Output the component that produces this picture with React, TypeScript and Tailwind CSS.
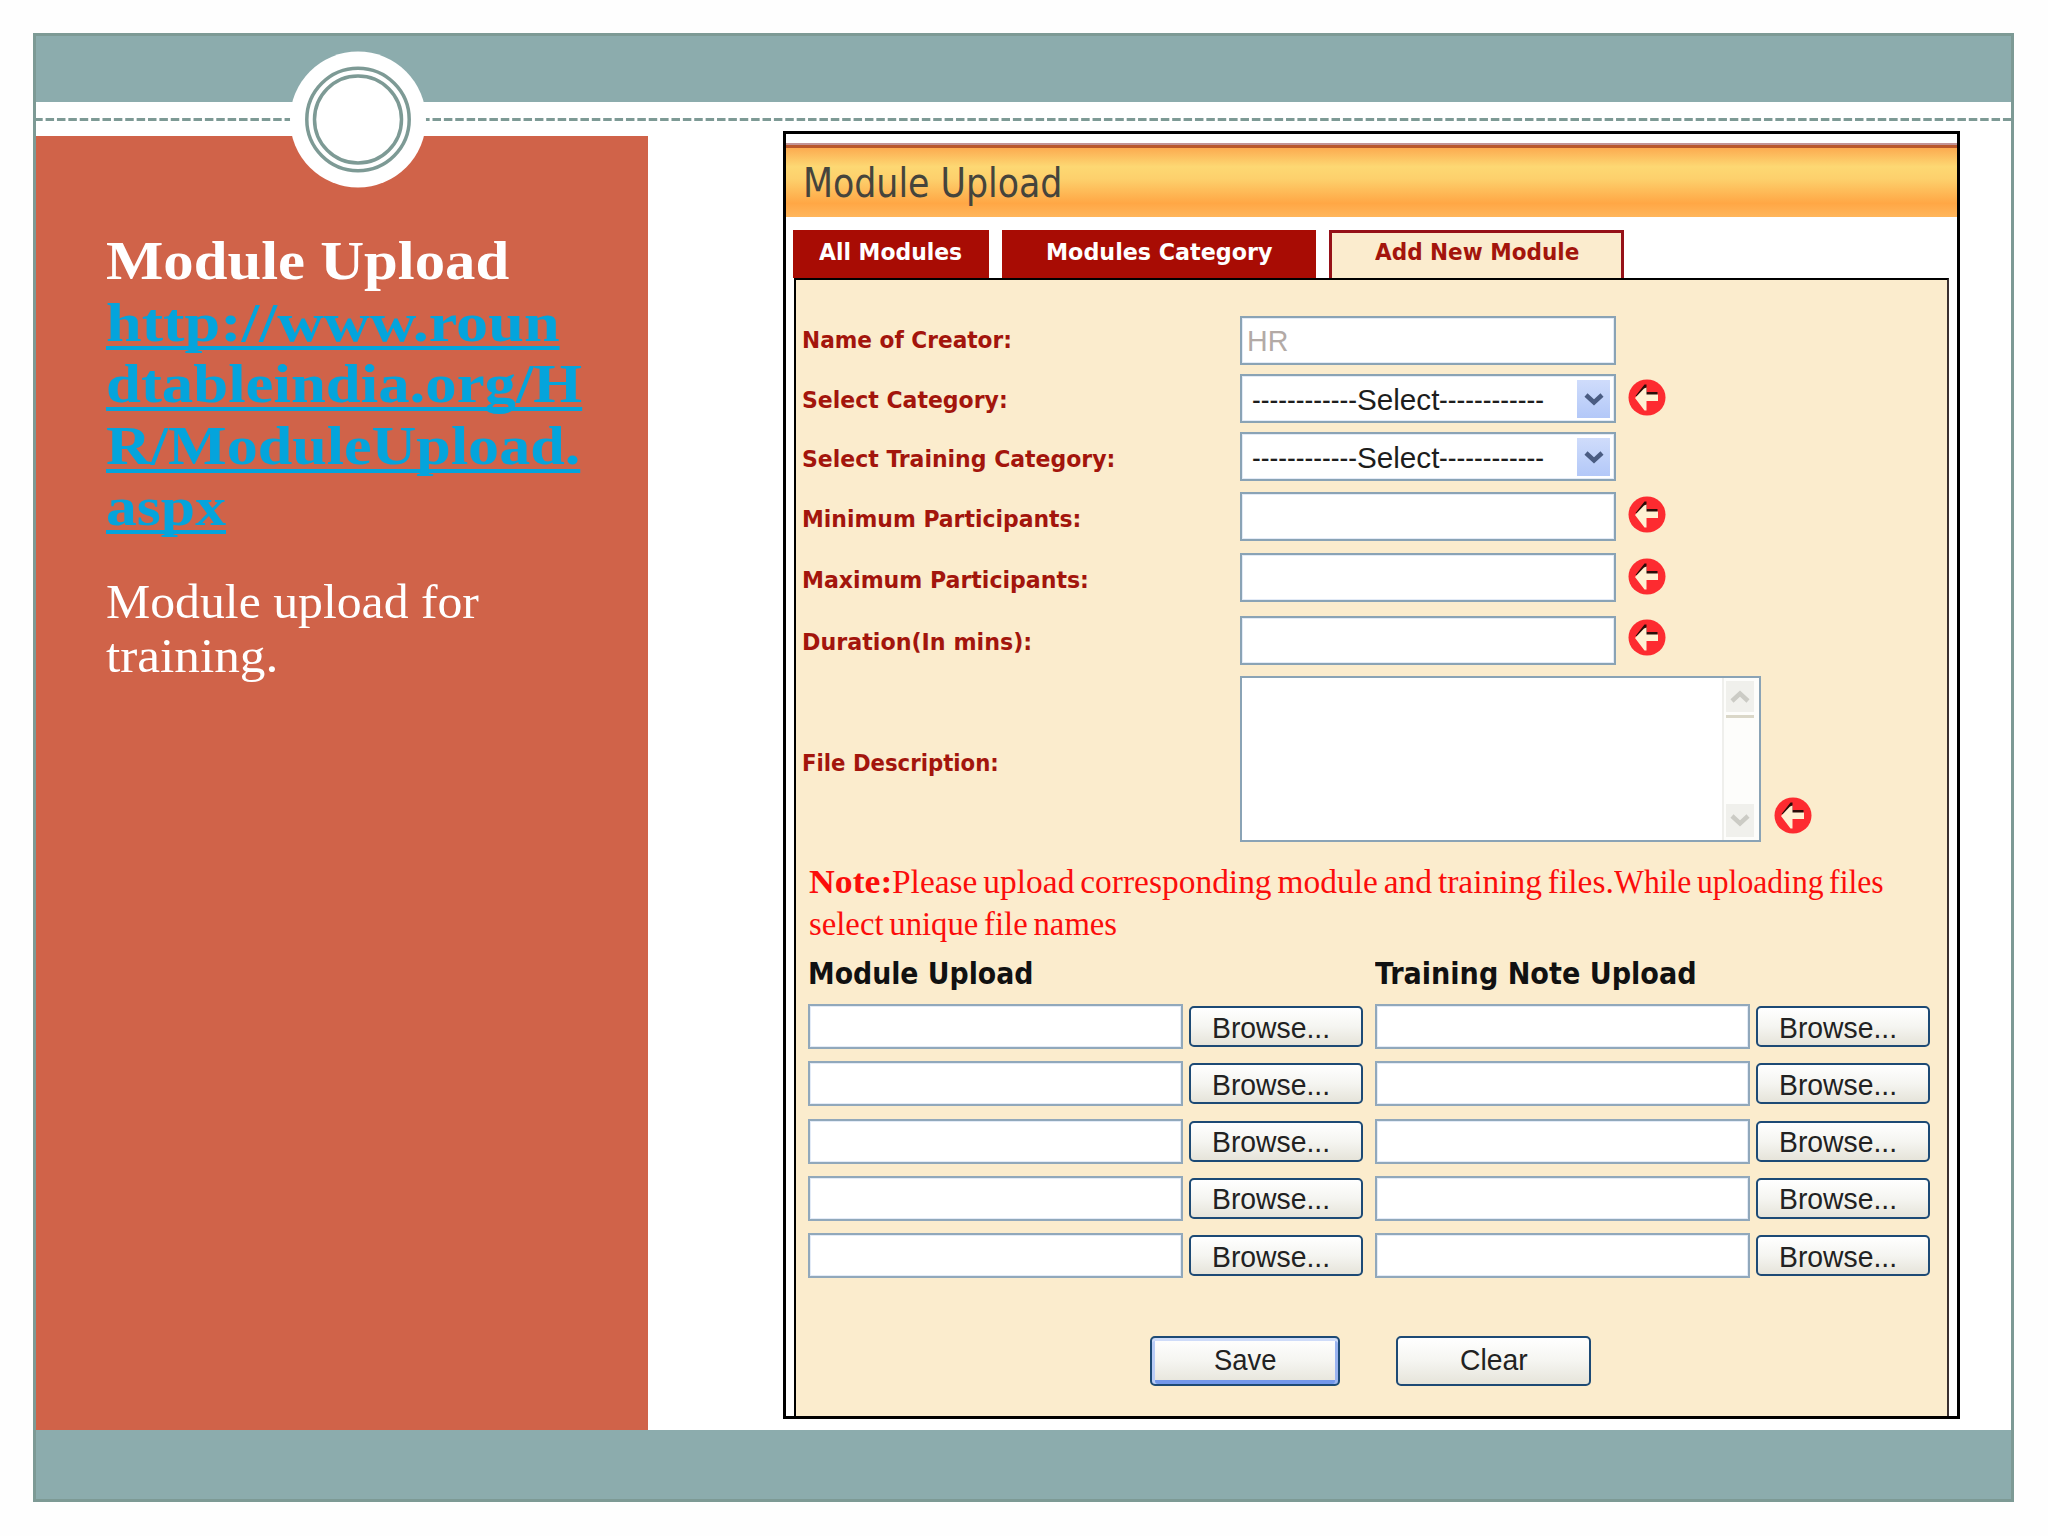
import React, { useLayoutEffect, useRef, useState } from "react";
import clsx from "clsx";

interface FitProps {
  width: number;
  className?: string;
  children: React.ReactNode;
}

// Stretches a single line of text horizontally so that it takes up `width` pixels
function Fit({ width, className, children }: FitProps) {
  const ref = useRef<HTMLSpanElement>(null);
  const [scale, setScale] = useState(1);

  useLayoutEffect(() => {
    if (ref.current) setScale(width / ref.current.offsetWidth);
  }, [width]);

  return (
    <span className="block shrink-0 whitespace-nowrap" style={{ width }}>
      <span
        ref={ref}
        className={clsx("inline-block origin-left align-top", className)}
        style={{ transform: `scaleX(${scale})` }}
      >
        {children}
      </span>
    </span>
  );
}

function RequiredIcon({ className }: { className?: string }) {
  return (
    <svg className={clsx("h-[37px] w-[38px] shrink-0", className)} viewBox="0 0 38 37">
      <ellipse cx="19" cy="18.5" rx="18.5" ry="18" fill="#fd2b30" />
      <path d="M7.5 17 L16.5 5.5 L18.5 5.5 L18.5 13 L29.5 13 L29.5 17 L12 18 Z" fill="#2a0d08" />
      <path d="M7 19 L16 9.5 L18.5 8.5 L18.5 15.5 L30 15.5 L30 22 L18.5 22 L18.5 31.5 L16.5 31.5 Z" fill="#fff1d2" />
    </svg>
  );
}

function Chevron({ up, className }: { up?: boolean; className?: string }) {
  return (
    <svg className={clsx("h-[13px] w-5", className)} viewBox="0 0 20 13" fill="none" stroke="currentColor" strokeWidth="4.5">
      <path d={up ? "M2 11 L10 3.5 L18 11" : "M2 2 L10 9.5 L18 2"} />
    </svg>
  );
}

function SelectBox() {
  return (
    <div className="flex h-[49px] w-[376px] items-center justify-between border-2 border-[#8aa3b5] bg-white pl-2.5 pr-1 shadow-[inset_0_0_0_1px_#e3ebf7]">
      <div className="flex pt-[3px] font-['Liberation_Sans',sans-serif] text-[30px] leading-9 text-[#1d1d1d]">
        <Fit width={105}>------------</Fit>
        <Fit width={82}>Select</Fit>
        <Fit width={105}>------------</Fit>
      </div>
      <div className="flex h-[38px] w-[33px] items-center justify-center bg-linear-to-b from-[#cfdcfb] to-[#b3c8f8] pt-0.5">
        <Chevron className="text-[#4a5c82]" />
      </div>
    </div>
  );
}

function TextBox({ value }: { value?: string }) {
  return (
    <div className="flex h-[49px] w-[376px] items-center border-2 border-[#8aa3b5] bg-white pl-[5px] font-['Liberation_Sans',sans-serif] text-[30px] leading-9 text-[#b3aaa6] shadow-[inset_0_0_0_1px_#e3ebf7]">
      {value && <Fit width={41}>{value}</Fit>}
    </div>
  );
}

function ScrollArea() {
  return (
    <div className="flex h-[166px] w-[521px] justify-end border-2 border-[#8aa3b5] bg-white">
      <div className="flex w-[37px] flex-col items-start justify-between border-l-2 border-[#efefec] bg-[#fdfdfb] py-[3px] pl-0.5">
        <div className="border-b-[3px] border-[#dad7c8] pb-[3px]">
          <div className="flex h-[31px] w-7 items-center justify-center bg-[#f0f0ec]">
            <Chevron up className="text-[#cbcbc5]" />
          </div>
        </div>
        <div className="flex h-[33px] w-7 items-center justify-center bg-[#f0f0ec]">
          <Chevron className="text-[#cbcbc5]" />
        </div>
      </div>
    </div>
  );
}

interface XpButtonProps {
  className: string;
  textWidth: number;
  children: React.ReactNode;
}

function XpButton({ className, textWidth, children }: XpButtonProps) {
  return (
    <button
      className={clsx(
        "flex shrink-0 items-center rounded-[5px] border-[2.5px] border-[#1d4a75] bg-linear-to-b from-white via-[#f5f5f1] to-[#e6e4da] font-['Liberation_Sans',sans-serif] text-[30px] leading-8 text-[#222]",
        className
      )}
    >
      <Fit width={textWidth}>{children}</Fit>
    </button>
  );
}

const fields = [
  { label: "Name of Creator:", labelWidth: 210, row: "h-[58px]", labelPad: "pb-0.5", kind: "text", value: "HR", icon: "" },
  { label: "Select Category:", labelWidth: 206, row: "h-[58px]", labelPad: "pt-0.5", kind: "select", icon: "mb-0.5" },
  { label: "Select Training Category:", labelWidth: 313, row: "h-[60px]", labelPad: "pt-[5px]", kind: "select", icon: "" },
  { label: "Minimum Participants:", labelWidth: 279, row: "h-[61px]", labelPad: "pt-1", kind: "text", icon: "mb-1" },
  { label: "Maximum Participants:", labelWidth: 287, row: "h-[63px]", labelPad: "pt-1", kind: "text", icon: "mb-[3px]" },
  { label: "Duration(In mins):", labelWidth: 230, row: "h-[60px]", labelPad: "pt-0.5", kind: "text", icon: "mb-1.5" },
];

const uploadRows = [1, 2, 3, 4, 5];

function UploadColumn({ title, titleWidth }: { title: string; titleWidth: number }) {
  return (
    <div>
      <h3 className="h-[42px] text-[30px] leading-[42px] font-bold text-[#111]">
        <Fit width={titleWidth}>{title}</Fit>
      </h3>
      <div className="mt-[9px] flex flex-col gap-[12.3px]">
        {uploadRows.map((row) => (
          <div key={row} className="flex items-center gap-1.5">
            <div className="h-[45px] w-[375px] border-2 border-[#91a8bb] bg-white shadow-[inset_0_0_0_1px_#e3ebf7]" />
            <XpButton className="mr-px h-[41px] w-[174px] pt-0.5 pl-[21px]" textWidth={118}>Browse...</XpButton>
          </div>
        ))}
      </div>
    </div>
  );
}

function ModuleForm() {
  return (
    <div className="-mt-[5px] ml-[135px] flex h-[1288px] w-[1177px] flex-col border-[3px] border-black bg-white font-['DejaVu_Sans_Condensed','DejaVu_Sans',sans-serif]">
      {/* Title bar */}
      <div className="mt-[9px] h-[5px] border-t-2 border-[#c39496] bg-[#b9572b]" />
      <div className="flex h-[69px] items-center bg-[linear-gradient(to_bottom,#fcab50_0%,#fdd873_27%,#fdd06c_45%,#ffa745_80%,#ffb65c_100%)] pl-[17px] text-[40px] leading-[50px] text-[#45443c]">
        <Fit width={259}>Module Upload</Fit>
      </div>

      {/* Tabs */}
      <div className="mt-[13px] ml-[7px] flex h-12 text-[23.5px] leading-8 font-bold">
        <div className="flex w-[196px] items-center bg-[#a80c04] pb-[5px] pl-[26px] text-white">
          <Fit width={143}>All Modules</Fit>
        </div>
        <div className="ml-[13px] flex w-[314px] items-center bg-[#a80c04] pb-[5px] pl-11 text-white">
          <Fit width={226}>Modules Category</Fit>
        </div>
        <div className="ml-[13px] flex w-[295px] items-center border-x-[3px] border-t-[3px] border-[#961118] bg-[#fbecce] pb-2 pl-[43px] text-[#a3150c]">
          <Fit width={204}>Add New Module</Fit>
        </div>
      </div>

      {/* Form body */}
      <div className="mr-2 ml-2 flex grow flex-col border-x-2 border-t-2 border-black border-r-[#3a3030] bg-[#fbeccd] pt-9 pl-px">
        {fields.map((field) => (
          <div key={field.label} className={clsx("flex", field.row)}>
            <div className={clsx("flex h-[49px] w-[443px] shrink-0 items-center pl-[5px] text-[23.5px] leading-8 font-bold text-[#a3150c]", field.labelPad)}>
              <Fit width={field.labelWidth}>{field.label}</Fit>
            </div>
            <div className="flex h-[49px] items-center gap-3">
              {field.kind === "select" ? <SelectBox /> : <TextBox value={field.value} />}
              {field.icon && <RequiredIcon className={field.icon} />}
            </div>
          </div>
        ))}
        <div className="flex h-[166px]">
          <div className="flex w-[443px] shrink-0 items-center pt-[7px] pl-[5px] text-[23.5px] leading-8 font-bold text-[#a3150c]">
            <Fit width={197}>File Description:</Fit>
          </div>
          <div className="flex items-end gap-[13px]">
            <ScrollArea />
            <RequiredIcon className="mb-2" />
          </div>
        </div>

        <div className="mt-[19px] pl-3 font-['Liberation_Serif',serif] text-[34px] leading-[42px] text-[#fb0d0b] [word-spacing:-2.5px]">
          <div className="flex">
            <Fit width={83} className="font-bold">Note:</Fit>
            <Fit width={722}>Please upload corresponding module and training files.</Fit>
            <Fit width={270}>While uploading files</Fit>
          </div>
          <Fit width={308}>select unique file names</Fit>
        </div>

        <div className="mt-2 flex gap-[11px] pl-[11px]">
          <UploadColumn title="Module Upload" titleWidth={225} />
          <UploadColumn title="Training Note Upload" titleWidth={322} />
        </div>

        <div className="mt-[58px] flex gap-14 pl-[353px]">
          <XpButton
            className="h-[50px] w-[190px] pb-[3px] pl-[62px] shadow-[inset_0_3px_0_#cfdcf9,inset_3px_0_0_#b9ccf6,inset_-3px_0_0_#9ab4f0,inset_0_-4px_0_#7397ea]"
            textWidth={62}
          >
            Save
          </XpButton>
          <XpButton className="h-[50px] w-[195px] pb-[3px] pl-[62px]" textWidth={68}>Clear</XpButton>
        </div>
      </div>
    </div>
  );
}

export default function App() {
  return (
    <div className="h-[1536px] w-[2048px] overflow-hidden bg-[#fefefe] pt-[33px] pl-[33px]">
      <div className="relative flex h-[1469px] w-[1981px] flex-col border-[3px] border-[#7d9a95] bg-white">
        <div className="h-[66px] bg-[#8cacad]" />
        <div className="flex h-[34px] items-center">
          <svg className="h-[3px] w-full" preserveAspectRatio="none">
            <line x1="-1.8" y1="1.5" x2="1980" y2="1.5" stroke="#7d9a95" strokeWidth="3" strokeDasharray="8.5 2.88" />
          </svg>
        </div>

        <div className="flex h-[1294px]">
          {/* Caption */}
          <div className="w-[612px] shrink-0 bg-[#d06349] pt-[94px] pl-[70px] font-['Liberation_Serif',serif] text-white">
            <h1 className="text-[55px] leading-[61.5px] font-bold">
              <Fit width={403}>Module Upload</Fit>
              <a className="text-[#04a4dc] decoration-4 underline-offset-[5px] [text-decoration-skip-ink:none]">
                <Fit width={454} className="underline decoration-4">http://www.roun</Fit>
                <Fit width={476} className="underline decoration-4">dtableindia.org/H</Fit>
                <Fit width={474} className="underline decoration-4">R/ModuleUpload.</Fit>
                <Fit width={120} className="underline decoration-4">aspx</Fit>
              </a>
            </h1>
            <div className="mt-[37px] text-[48px] leading-[54.5px]">
              <Fit width={373}>Module upload for</Fit>
              <Fit width={172}>training.</Fit>
            </div>
          </div>
          <ModuleForm />
        </div>

        <div className="grow bg-[#8cacad]" />

        {/* Ring over the divider */}
        <svg className="absolute top-[15px] left-[254px] h-[137px] w-[136px]" viewBox="0 0 136 137" fill="none" stroke="#7d9a95" strokeWidth="3.5">
          <circle cx="68" cy="68.5" r="68" fill="#fff" stroke="none" />
          <circle cx="68" cy="68.5" r="51.2" />
          <circle cx="68" cy="68.5" r="43.5" />
        </svg>
      </div>
    </div>
  );
}
